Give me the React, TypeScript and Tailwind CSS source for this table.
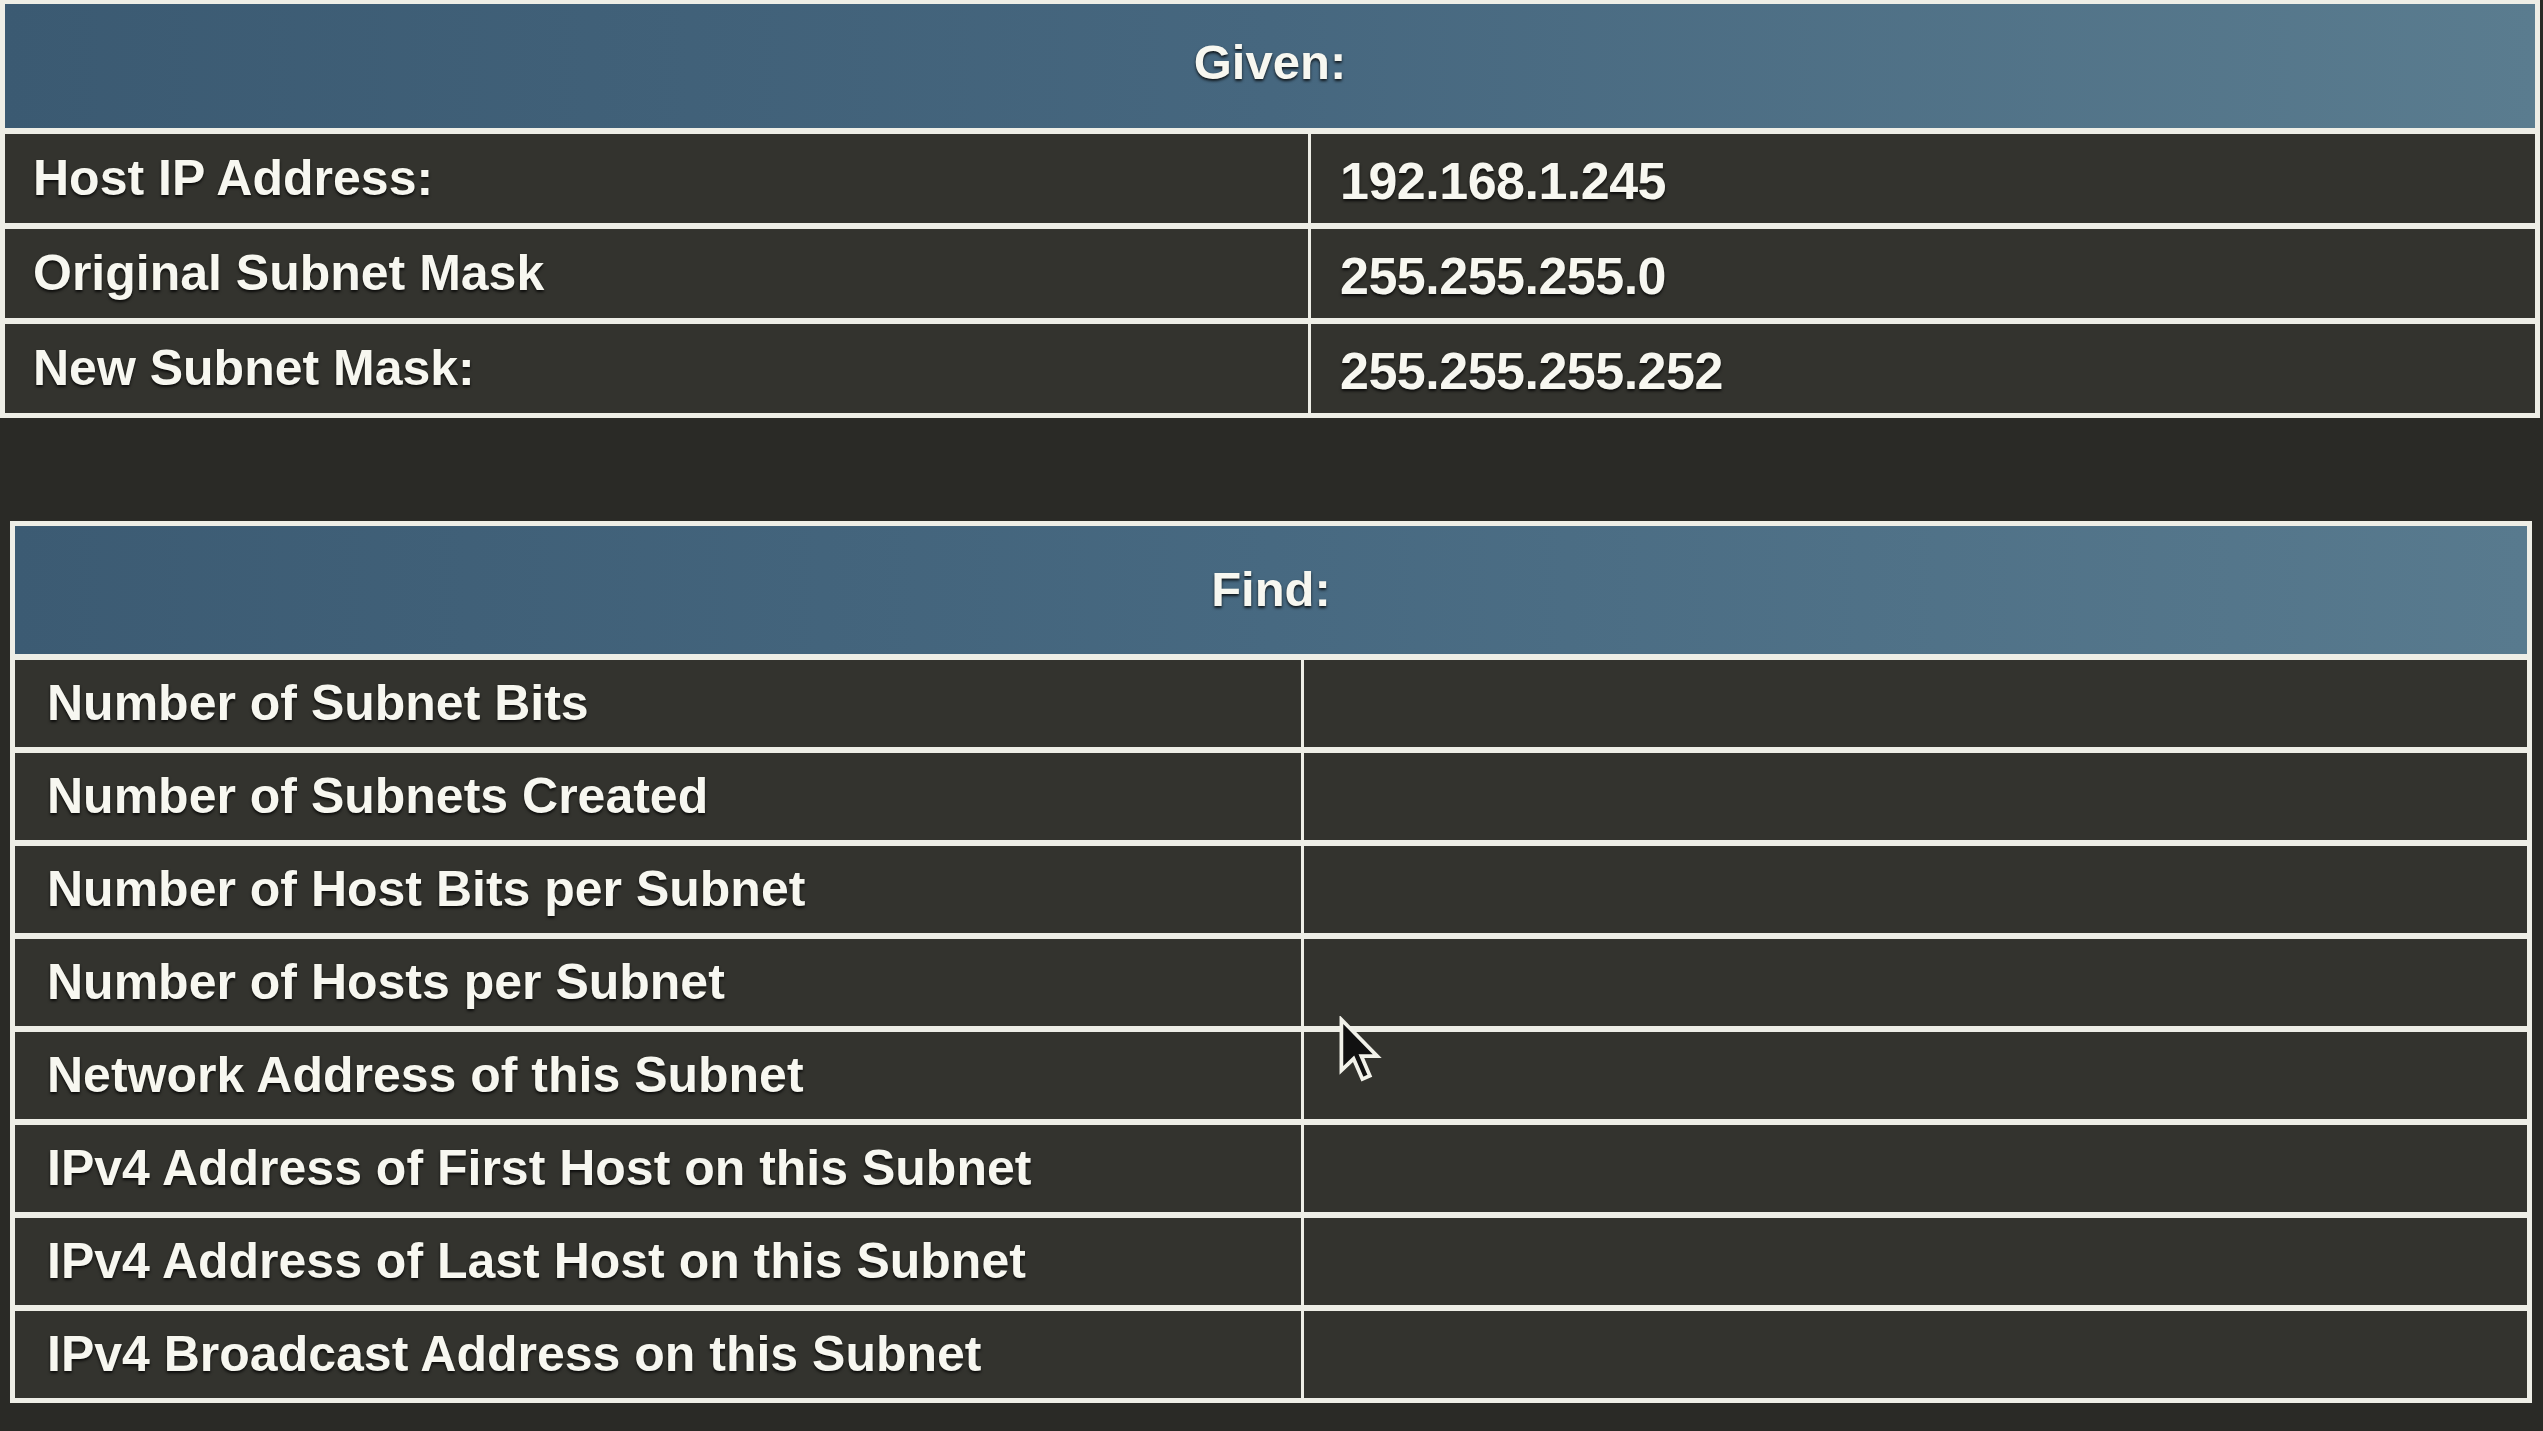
import React from "react";

const givenRows: [string, string][] = [
  ["Host IP Address:", "192.168.1.245"],
  ["Original Subnet Mask", "255.255.255.0"],
  ["New Subnet Mask:", "255.255.255.252"],
];

const findRows: string[] = [
  "Number of Subnet Bits",
  "Number of Subnets Created",
  "Number of Host Bits per Subnet",
  "Number of Hosts per Subnet",
  "Network Address of this Subnet",
  "IPv4 Address of First Host on this Subnet",
  "IPv4 Address of Last Host on this Subnet",
  "IPv4 Broadcast Address on this Subnet",
];

function Cursor() {
  return (
    <svg
      className="absolute left-[1338px] top-[1016px]"
      width="44"
      height="68"
      viewBox="0 0 13 20"
    >
      <path
        d="M1 1 L1 16 L4.6 12.6 L7.2 18.6 L9.4 17.6 L6.9 11.8 L11.6 11.8 Z"
        fill="#111"
        stroke="#f2f2ea"
        strokeWidth="1.1"
        strokeLinejoin="miter"
      />
    </svg>
  );
}

export default function App() {
  return (
    <div
      className="relative w-[2543px] h-[1431px] overflow-hidden bg-[#2a2a26] text-[#f7f7f0] font-bold [text-shadow:0_2px_3px_rgba(0,0,0,0.8)]"
      style={{ fontFamily: '"Liberation Sans", Arial, Helvetica, sans-serif' }}
    >
      {/* Given table */}
      <div className="ml-0 w-[2540px] border-[5px] border-t-[4px] border-[#eeeee6] flex flex-col">
        <div className="h-[124px] flex items-center justify-center bg-gradient-to-r from-[#3b5a72] via-[#46677f] to-[#5a7c8f] text-[49px] pb-[6px]">
          Given:
        </div>
        {givenRows.map(([label, value]) => (
          <div
            key={label}
            className="grid grid-cols-[1306px_1fr] border-t-[6px] border-[#eeeee6] h-[95px] bg-[#33332e]"
          >
            <div className="flex items-center pl-[28px] border-r-[3px] border-[#eeeee6] text-[50px]">
              {label}
            </div>
            <div className="flex items-center pl-[29px] pt-[4px] text-[52px] tracking-[-0.5px]">
              {value}
            </div>
          </div>
        ))}
      </div>

      {/* Find table */}
      <div className="mt-[103px] ml-[10px] w-[2522px] border-[5px] border-[#eeeee6] flex flex-col">
        <div className="h-[128px] flex items-center justify-center bg-gradient-to-r from-[#3c5b73] via-[#476981] to-[#587a8e] text-[49px]">
          Find:
        </div>
        {findRows.map((label) => (
          <div
            key={label}
            className="grid grid-cols-[1289px_1fr] border-t-[6px] border-[#eeeee6] h-[93px] bg-[#33332e]"
          >
            <div className="flex items-center pl-[32px] border-r-[3px] border-[#eeeee6] text-[50px]">
              {label}
            </div>
            <div />
          </div>
        ))}
      </div>

      <Cursor />
    </div>
  );
}
